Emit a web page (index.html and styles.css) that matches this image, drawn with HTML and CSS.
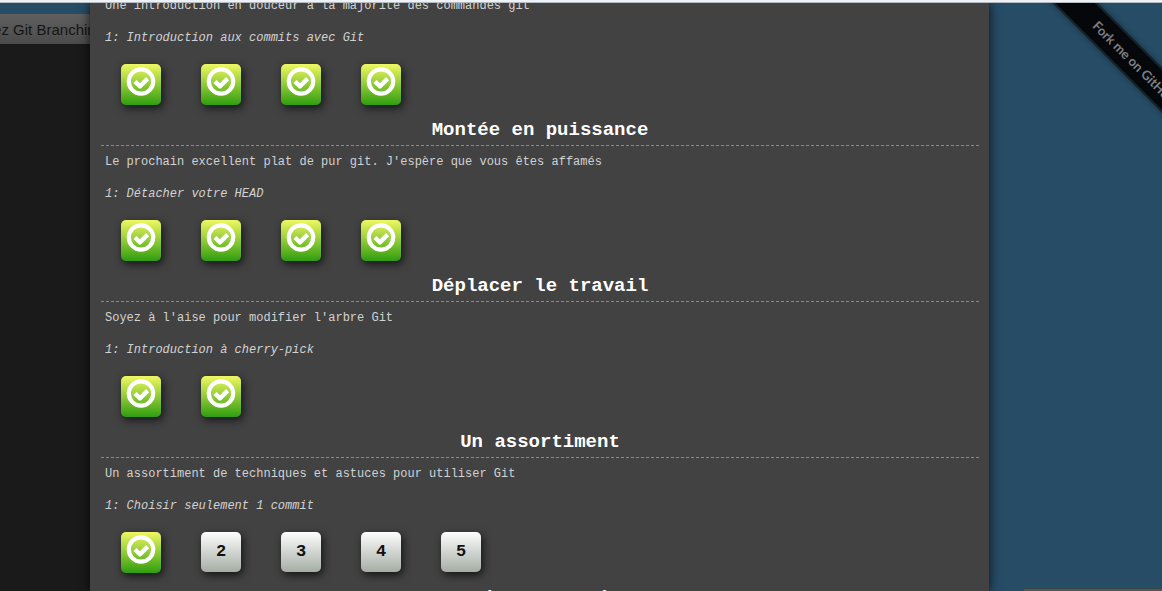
FILE: index.html
```html
<!DOCTYPE html>
<html lang="fr">
<head>
<meta charset="utf-8">
<title>Learn Git Branching</title>
<link rel="stylesheet" href="styles.css">
</head>
<body>
<svg class="symbols" aria-hidden="true">
  <symbol id="check" viewBox="0 0 30 30">
    <circle cx="15" cy="14.500" r="12.200" fill="none" stroke="currentColor" stroke-width="4.200"/>
    <path d="M9 14.500l4.800 4.800 7.800-7.600" fill="none" stroke="currentColor" stroke-width="4.400" stroke-linejoin="round"/>
  </symbol>
</svg>
<div class="topline"></div>
<div class="app">
  <aside class="terminal">
    <div class="terminal-bar"><span class="terminal-title">Apprenez Git Branching</span></div>
    <div class="terminal-body"></div>
  </aside>
  <main class="levels">
    <div class="levels-content">
      <section class="series">
        <p class="about">Une introduction en douceur à la majorité des commandes git</p>
        <p class="current">1: Introduction aux commits avec Git</p>
        <div class="icons">
          <button class="level solved" aria-label="Niveau 1"><svg class="check"><use href="#check"/></svg></button>
          <button class="level solved" aria-label="Niveau 2"><svg class="check"><use href="#check"/></svg></button>
          <button class="level solved" aria-label="Niveau 3"><svg class="check"><use href="#check"/></svg></button>
          <button class="level solved" aria-label="Niveau 4"><svg class="check"><use href="#check"/></svg></button>
        </div>
      </section>
      <section class="series">
        <h2 class="title">Montée en puissance</h2>
        <p class="about">Le prochain excellent plat de pur git. J'espère que vous êtes affamés</p>
        <p class="current">1: Détacher votre HEAD</p>
        <div class="icons">
          <button class="level solved" aria-label="Niveau 1"><svg class="check"><use href="#check"/></svg></button>
          <button class="level solved" aria-label="Niveau 2"><svg class="check"><use href="#check"/></svg></button>
          <button class="level solved" aria-label="Niveau 3"><svg class="check"><use href="#check"/></svg></button>
          <button class="level solved" aria-label="Niveau 4"><svg class="check"><use href="#check"/></svg></button>
        </div>
      </section>
      <section class="series">
        <h2 class="title">Déplacer le travail</h2>
        <p class="about">Soyez à l'aise pour modifier l'arbre Git</p>
        <p class="current">1: Introduction à cherry-pick</p>
        <div class="icons">
          <button class="level solved" aria-label="Niveau 1"><svg class="check"><use href="#check"/></svg></button>
          <button class="level solved" aria-label="Niveau 2"><svg class="check"><use href="#check"/></svg></button>
        </div>
      </section>
      <section class="series">
        <h2 class="title">Un assortiment</h2>
        <p class="about">Un assortiment de techniques et astuces pour utiliser Git</p>
        <p class="current">1: Choisir seulement 1 commit</p>
        <div class="icons">
          <button class="level solved" aria-label="Niveau 1"><svg class="check"><use href="#check"/></svg></button>
          <button class="level">2</button>
          <button class="level">3</button>
          <button class="level">4</button>
          <button class="level">5</button>
        </div>
      </section>
      <section class="series">
        <h2 class="title">Sujets avancés</h2>
      </section>
    </div>
  </main>
  <aside class="canvas">
    <a class="ribbon" href="#">Fork me on GitHub</a>
    <div class="drawer"></div>
  </aside>
</div>
</body>
</html>
```
FILE: styles.css
```css
* { box-sizing: border-box; }

body {
  margin: 0;
  height: 100vh;
  display: flex;
  flex-direction: column;
  overflow: hidden;
  background: #264c66;
  font-family: "Liberation Mono", "Courier New", monospace;
}

.symbols { display: none; }

.topline {
  position: relative;
  z-index: 2;
  flex: none;
  height: 3px;
  background: #eef2f6;
  border-bottom: 1px solid #b4bcc2;
}

.app {
  flex: 1;
  min-height: 0;
  display: grid;
  grid-template-columns: 90px minmax(0, 1fr) 173px;
  grid-template-rows: minmax(0, 1fr);
}

.terminal {
  display: flex;
  flex-direction: column;
  padding-top: 11px;
  overflow: hidden;
}

.terminal-bar {
  height: 30px;
  flex: none;
  display: flex;
  align-items: center;
  justify-content: flex-end;
  background: linear-gradient(#5f5f5f, #4b4b4b);
  font-family: "Liberation Sans", Arial, sans-serif;
  font-size: 15px;
  color: #151515;
  white-space: nowrap;
}

.terminal-title { margin-right: -14px; }

.terminal-body {
  flex: 1;
  background: #1a1a1a;
}

.levels {
  position: relative;
  z-index: 1;
  overflow: hidden;
  padding: 0 10px 0 11px;
  background: #424242;
  box-shadow: 0 0 10px rgba(0, 0, 0, 0.8);
}

.levels-content { margin-top: -13px; }

.title {
  margin: 0;
  height: 32px;
  line-height: 32px;
  border-bottom: 1px dashed #8a8a8a;
  font-size: 19px;
  text-align: center;
  color: #fff;
}

.about,
.current {
  margin: 0;
  padding: 0 4px;
  line-height: 32px;
  font-size: 12px;
  color: #d2d2d2;
}

.current { font-style: italic; }

.icons {
  display: flex;
  gap: 40px;
  height: 60px;
  padding: 10px 20px;
}

.level {
  width: 40px;
  height: 40px;
  padding: 0;
  border: 0;
  border-radius: 5px;
  background: linear-gradient(#fdfdfd, #a5ada5);
  box-shadow: 2px 3px 8px rgba(0, 0, 0, 0.7);
  font: bold 17px/40px "Liberation Mono", "Courier New", monospace;
  color: #111;
}

.solved {
  height: 41px;
  padding: 3px 5px 8px;
  background: linear-gradient(#f0f860, #2f9d10);
  color: #fff;
}

.check {
  display: block;
  width: 30px;
  height: 30px;
}

.canvas {
  position: relative;
  overflow: hidden;
  display: flex;
  flex-direction: column;
  justify-content: flex-end;
}

.ribbon {
  position: absolute;
  top: -35px;
  left: 66px;
  width: 220px;
  height: 30px;
  padding-left: 56px;
  transform: rotate(45deg);
  transform-origin: left center;
  background: #05070a;
  border: 1px solid #1b2831;
  outline: 1px solid #14222c;
  box-shadow: 0 0 6px rgba(0, 0, 0, 0.5);
  font: bold 13px/28px Lato, sans-serif;
  color: #7c7f84;
  text-decoration: none;
  white-space: nowrap;
}

.drawer {
  height: 3px;
  margin-left: 35px;
  background: #555;
  border-top: 1px solid #33454f;
}
```
